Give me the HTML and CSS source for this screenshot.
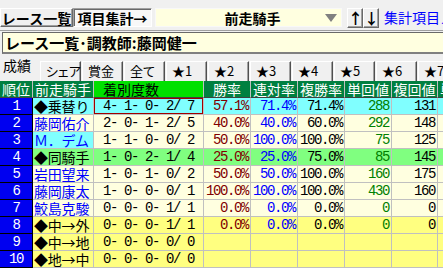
FILE: index.html
```html
<!DOCTYPE html>
<html lang="ja">
<head>
    <meta charset="UTF-8">
    <title>項目集計</title>
    <link rel="stylesheet" href="styles.css">
</head>
<body>
    <div class="toolbar">
        <button class="btn list">レース一覧</button>
        <button class="btn active">項目集計→</button>
        <div class="select">
            <span class="select-text">前走騎手</span>
            <span class="select-arrow"></span>
        </div>
        <button class="btn arrow up">↑</button>
        <button class="btn arrow">↓</button>
        <div class="menu-wrap"><a class="menu-link" href="#">集計項目メニュー</a></div>
    </div>

    <div class="title">レース一覧･調教師:藤岡健一</div>

    <div class="tabs">
        <div class="tab selected">成績</div>
        <div class="tab">シェア</div>
        <div class="tab">賞金</div>
        <div class="tab">全て</div>
        <div class="tab">★1</div>
        <div class="tab">★2</div>
        <div class="tab">★3</div>
        <div class="tab">★4</div>
        <div class="tab">★5</div>
        <div class="tab">★6</div>
        <div class="tab">★7</div>
    </div>

    <div class="grid-wrap">
    <table class="grid">
        <colgroup>
            <col class="c-rank">
            <col class="c-name">
            <col class="c-count">
            <col class="c-rate">
            <col class="c-rate">
            <col class="c-rate">
            <col class="c-rate">
            <col class="c-rate2">
            <col class="c-more">
        </colgroup>
        <thead>
            <tr>
                <th>順位</th>
                <th>前走騎手</th>
                <th class="h-count">着別度数</th>
                <th>勝率</th>
                <th>連対率</th>
                <th>複勝率</th>
                <th>単回値</th>
                <th>複回値</th>
                <th class="h-more">単勝</th>
            </tr>
        </thead>
        <tbody>
            <tr class="row-cyan">
                <td class="rank">1</td>
                <td class="name mark">◆乗替り</td>
                <td class="count current">4- 1- 0- 2/ 7</td>
                <td class="num win">57.1%</td>
                <td class="num place">71.4%</td>
                <td class="num">71.4%</td>
                <td class="num ret">288</td>
                <td class="num">131</td>
                <td></td>
            </tr>
            <tr>
                <td class="rank">2</td>
                <td class="name">藤岡佑介</td>
                <td class="count">2- 0- 1- 2/ 5</td>
                <td class="num win">40.0%</td>
                <td class="num place">40.0%</td>
                <td class="num">60.0%</td>
                <td class="num ret">292</td>
                <td class="num">148</td>
                <td></td>
            </tr>
            <tr>
                <td class="rank">3</td>
                <td class="name hl">Ｍ．デム</td>
                <td class="count">1- 1- 0- 0/ 2</td>
                <td class="num win">50.0%</td>
                <td class="num place">100.0%</td>
                <td class="num">100.0%</td>
                <td class="num ret">75</td>
                <td class="num">125</td>
                <td></td>
            </tr>
            <tr class="row-green">
                <td class="rank">4</td>
                <td class="name mark">◆同騎手</td>
                <td class="count">1- 0- 2- 1/ 4</td>
                <td class="num win">25.0%</td>
                <td class="num place">25.0%</td>
                <td class="num">75.0%</td>
                <td class="num ret">85</td>
                <td class="num">145</td>
                <td></td>
            </tr>
            <tr>
                <td class="rank">5</td>
                <td class="name">岩田望来</td>
                <td class="count">1- 0- 1- 0/ 2</td>
                <td class="num win">50.0%</td>
                <td class="num place">50.0%</td>
                <td class="num">100.0%</td>
                <td class="num ret">160</td>
                <td class="num">175</td>
                <td></td>
            </tr>
            <tr>
                <td class="rank">6</td>
                <td class="name">藤岡康太</td>
                <td class="count">1- 0- 0- 0/ 1</td>
                <td class="num win">100.0%</td>
                <td class="num place">100.0%</td>
                <td class="num">100.0%</td>
                <td class="num ret">430</td>
                <td class="num">160</td>
                <td></td>
            </tr>
            <tr>
                <td class="rank">7</td>
                <td class="name">鮫島克駿</td>
                <td class="count">0- 0- 0- 1/ 1</td>
                <td class="num win">0.0%</td>
                <td class="num place">0.0%</td>
                <td class="num">0.0%</td>
                <td class="num ret">0</td>
                <td class="num">0</td>
                <td></td>
            </tr>
            <tr class="row-yellow">
                <td class="rank">8</td>
                <td class="name mark">◆中→外</td>
                <td class="count">0- 0- 0- 1/ 1</td>
                <td class="num win">0.0%</td>
                <td class="num place">0.0%</td>
                <td class="num">0.0%</td>
                <td class="num ret">0</td>
                <td class="num">0</td>
                <td></td>
            </tr>
            <tr class="row-yellow">
                <td class="rank">9</td>
                <td class="name mark">◆中→地</td>
                <td class="count">0- 0- 0- 0/ 0</td>
                <td></td>
                <td></td>
                <td></td>
                <td></td>
                <td></td>
                <td></td>
            </tr>
            <tr class="row-yellow">
                <td class="rank">10</td>
                <td class="name mark">◆地→中</td>
                <td class="count">0- 0- 0- 0/ 0</td>
                <td></td>
                <td></td>
                <td></td>
                <td></td>
                <td></td>
                <td></td>
            </tr>
        </tbody>
    </table>
    </div>
</body>
</html>
```

FILE: styles.css
```css
body {
    margin: 0;
    background-color: #f0f0f0;
    font-family: "Noto Sans CJK JP", sans-serif;
    font-size: 14px;
    overflow: hidden;
    width: 443px;
    height: 268px;
}

/* top toolbar */
.toolbar {
    display: flex;
    align-items: flex-start;
    height: 20px;
    padding-top: 8px;
    padding-bottom: 2px;
    border-bottom: 1px solid #a0a0a0;
    white-space: nowrap;
    overflow: hidden;
}
.btn {
    flex: none;
    box-sizing: border-box;
    font-family: inherit;
    font-size: 14px;
    font-weight: bold;
    line-height: 16px;
    height: 19px;
    padding: 0;
    margin: 0;
    background-color: #f0f0f0;
    border: 1px solid;
    border-color: #ffffff #696969 #696969 #ffffff;
    box-shadow: inset -1px -1px 0 #a0a0a0;
    color: #000;
    text-align: center;
}
.btn.list {
    width: 73px;
}
.btn.active {
    width: 79px;
    background-color: #f8f8f8;
    border-color: #a0a0a0 #ffffff #ffffff #a0a0a0;
    box-shadow: inset 1px 1px 0 #696969;
}
.select {
    flex: none;
    box-sizing: border-box;
    display: flex;
    align-items: center;
    width: 187px;
    height: 19px;
    margin-left: 3px;
    background-color: #ffffe0;
    border: 1px solid #f8f8f8;
    font-weight: bold;
}
.select-text {
    flex: 1;
    text-align: center;
    padding-left: 24px;
}
.select-arrow {
    width: 0;
    height: 0;
    border-left: 6px solid transparent;
    border-right: 6px solid transparent;
    border-top: 8px solid #808080;
    margin-right: 4px;
}
.btn.arrow {
    width: 16px;
    height: 20px;
    font-size: 15px;
}
.btn.arrow.up {
    margin-left: 5px;
}
.menu-wrap {
    flex: 1;
    min-width: 0;
    overflow: hidden;
    margin-left: 5px;
    line-height: 18px;
}
.menu-link {
    color: #0000ff;
    text-decoration: none;
}

/* title */
.title {
    margin: 1px 0 1px 2px;
    height: 19px;
    line-height: 19px;
    padding-left: 2px;
    background-color: #ffffe0;
    border-top: 1px solid #696969;
    border-left: 1px solid #696969;
    border-bottom: 2px solid #808080;
    font-weight: bold;
    font-size: 15px;
    white-space: nowrap;
}

/* tabs */
.tabs {
    display: flex;
    align-items: flex-end;
    height: 26px;
    white-space: nowrap;
    overflow: hidden;
    font-size: 13px;
    font-feature-settings: "palt";
}
.tab {
    flex: none;
    box-sizing: border-box;
    width: 41px;
    height: 20px;
    margin-right: 1px;
    line-height: 17px;
    padding-left: 5px;
    background-color: #f0f0f0;
    border-top: 1px solid #ffffff;
    border-left: 1px solid #ffffff;
    border-right: 1px solid #505050;
    box-shadow: inset -1px 0 0 #a0a0a0;
}
.tab.selected {
    width: 40px;
    margin-right: 0;
    height: 24px;
    line-height: 16px;
    padding-bottom: 8px;
    padding-left: 3px;
    border: none;
    box-shadow: none;
    font-size: 14px;
}

/* grid */
.grid-wrap {
    width: 443px;
    overflow: hidden;
}
.grid {
    table-layout: fixed;
    border-collapse: separate;
    border-spacing: 0;
    width: 493px;
}
.c-rank { width: 33px; }
.c-name { width: 61px; }
.c-count { width: 110px; }
.c-rate { width: 47px; }
.c-rate2 { width: 46px; }
.c-more { width: 56px; }

.grid th,
.grid td {
    box-sizing: border-box;
    height: 17px;
    padding: 0;
    border-right: 1px solid #c0c0c0;
    border-bottom: 1px solid #c0c0c0;
    white-space: nowrap;
    line-height: 16px;
    background-color: #ffffe0;
}
.grid th {
    background-color: #008040;
    color: #ffffff;
    font-weight: normal;
    text-align: center;
    border-bottom-color: #404040;
}
.grid th.h-count {
    background-color: #00e000;
    color: #000;
    text-align: left;
    padding-left: 9px;
}
.grid th.h-more {
    text-align: left;
    padding-left: 2px;
    overflow: hidden;
}

.grid td.rank {
    background-color: #0000f0;
    color: #ffffff;
    text-align: center;
    border-right-color: #000000;
    border-bottom-color: #000000;
    font-family: "Liberation Mono", monospace;
    font-size: 14px;
    letter-spacing: -1.4px;
}
.grid td.name {
    color: #0000ff;
    padding-left: 1px;
    letter-spacing: -0.2px;
}
.grid td.name.mark {
    color: #000000;
}
.grid td.name.hl {
    background-color: #80ffff;
}
.grid td.count {
    text-align: center;
    font-family: "Liberation Mono", monospace;
    font-size: 14px;
    letter-spacing: -1.4px;
}
.grid td.count.current {
    box-shadow: inset 0 0 0 1px #a00000;
}
.grid td.num {
    text-align: right;
    padding-right: 2px;
    font-family: "Liberation Mono", monospace;
    font-size: 14px;
    letter-spacing: -1.4px;
}
.grid td.win { color: #800000; }
.grid td.place { color: #0000ff; }
.grid td.ret { color: #008000; }

.row-cyan td { background-color: #80ffff; }
.row-green td { background-color: #80ff80; }
.row-yellow td { background-color: #ffff80; }
```
